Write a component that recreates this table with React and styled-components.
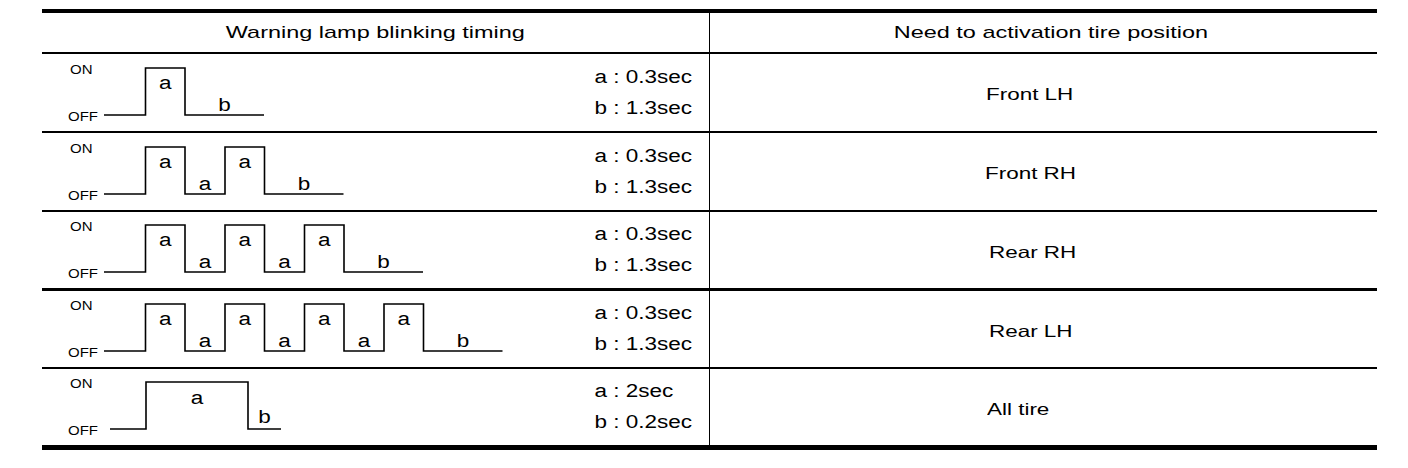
import React from "react";
import styled, { createGlobalStyle } from "styled-components";

const GlobalStyle = createGlobalStyle`
  *, *::before, *::after {
    box-sizing: border-box;
  }
  body {
    margin: 0;
    background: #fff;
    font-family: "Liberation Sans", Arial, sans-serif;
    color: #000;
  }
`;

const Page = styled.div`
  padding: 9px 0 0 42px;
`;

const Table = styled.div`
  width: 1335px;
  border-top: 4px solid #000;
  border-bottom: 5px solid #000;
  display: grid;
  grid-template-columns: 667px 1fr;
`;

const HeadCell = styled.div`
  height: 41px;
  padding-left: ${(p) => p.$shift || 0}px;
  border-bottom: 2px solid #000;
  border-left: ${(p) => (p.$divider ? "1px solid #000" : "none")};
  display: flex;
  align-items: center;
  justify-content: center;
  font-size: 17px;
`;

const Cell = styled.div`
  height: ${(p) => p.$h}px;
  border-bottom: ${(p) => (p.$last ? "none" : `${p.$line}px solid #000`)};
  border-left: ${(p) => (p.$divider ? "1px solid #000" : "none")};
  display: flex;
  align-items: center;
`;

const TimingCell = styled(Cell)`
  justify-content: space-between;
  padding-right: 17px;
`;

const PositionCell = styled(Cell)`
  justify-content: flex-start;
  padding-top: 4px;
  padding-left: ${(p) => p.$indent}px;
  font-size: 16.5px;
`;

const Wide = styled.span`
  display: inline-block;
  white-space: pre;
  transform: scaleX(${(p) => p.$sx});
  transform-origin: ${(p) => p.$origin || "center"};
`;

const Times = styled.div`
  display: flex;
  flex-direction: column;
  align-items: flex-start;
  font-size: 18px;
  line-height: 31px;
  white-space: pre;
  transform: scaleX(1.25);
  transform-origin: right center;
`;

const Wave = styled.svg`
  display: block;
  overflow: visible;
`;

const FONT = '"Liberation Sans", Arial, sans-serif';

const Label = ({ x, y, size = 18, sx = 1.25, children }) => (
  <text
    transform={`translate(${x} ${y}) scale(${sx} 1)`}
    fontSize={size}
    fontFamily={FONT}
    textAnchor="middle"
  >
    {children}
  </text>
);

const HIGH = 13;
const LOW = 60;

function Waveform({ pulses, long }) {
  let d;
  const labels = [];
  if (long) {
    d = `M68 ${LOW} H104 V${HIGH} H206 V${LOW} H239`;
    labels.push({ x: 155, y: 35, t: "a" });
    labels.push({ x: 222.5, y: 54, t: "b" });
  } else {
    const P = 79.5;
    const W = 39.5;
    d = `M62 ${LOW}`;
    for (let i = 0; i < pulses; i++) {
      const rise = 103.5 + i * P;
      const fall = rise + W;
      d += ` H${rise} V${HIGH} H${fall} V${LOW}`;
      labels.push({ x: rise + W / 2, y: 34, t: "a" });
      if (i < pulses - 1) labels.push({ x: fall + (P - W) / 2, y: 56, t: "a" });
      else {
        d += ` H${fall + 79}`;
        labels.push({ x: fall + 39.5, y: 56, t: "b" });
      }
    }
  }
  return (
    <Wave width="480" height="76" viewBox="0 0 480 76">
      <text
        transform="translate(28 19) scale(1.2 1)"
        fontSize="12.5"
        fontFamily={FONT}
      >
        ON
      </text>
      <text
        transform="translate(26 66) scale(1.2 1)"
        fontSize="12.5"
        fontFamily={FONT}
      >
        OFF
      </text>
      <path d={d} fill="none" stroke="#000" strokeWidth="1.6" />
      {labels.map((l, i) => (
        <Label key={i} x={l.x} y={l.y}>
          {l.t}
        </Label>
      ))}
    </Wave>
  );
}

// heights include the bottom rule of each row
const rows = [
  { pulses: 1, a: "0.3sec", b: "1.3sec", pos: "Front LH", h: 79, line: 2, indent: 276 },
  { pulses: 2, a: "0.3sec", b: "1.3sec", pos: "Front RH", h: 79, line: 2, indent: 275 },
  { pulses: 3, a: "0.3sec", b: "1.3sec", pos: "Rear RH", h: 79, line: 3, indent: 279 },
  { pulses: 4, a: "0.3sec", b: "1.3sec", pos: "Rear LH", h: 78, line: 2, indent: 279 },
  { long: true, a: "2sec", b: "0.2sec", pos: "All tire", h: 76, line: 0, indent: 277 },
];

export default function App() {
  return (
    <Page>
      <GlobalStyle />
      <Table>
        <HeadCell>
          <Wide $sx={1.38}>Warning lamp blinking timing</Wide>
        </HeadCell>
        <HeadCell $divider $shift={14}>
          <Wide $sx={1.38}>Need to activation tire position</Wide>
        </HeadCell>
        {rows.map((r, i) => {
          const last = i === rows.length - 1;
          return (
            <React.Fragment key={i}>
              <TimingCell $h={r.h} $line={r.line} $last={last}>
                <Waveform pulses={r.pulses} long={r.long} />
                <Times>
                  <span>{`a : ${r.a}`}</span>
                  <span>{`b : ${r.b}`}</span>
                </Times>
              </TimingCell>
              <PositionCell
                $h={r.h}
                $line={r.line}
                $indent={r.indent}
                $divider
                $last={last}
              >
                <Wide $sx={1.36} $origin="left">{r.pos}</Wide>
              </PositionCell>
            </React.Fragment>
          );
        })}
      </Table>
    </Page>
  );
}
